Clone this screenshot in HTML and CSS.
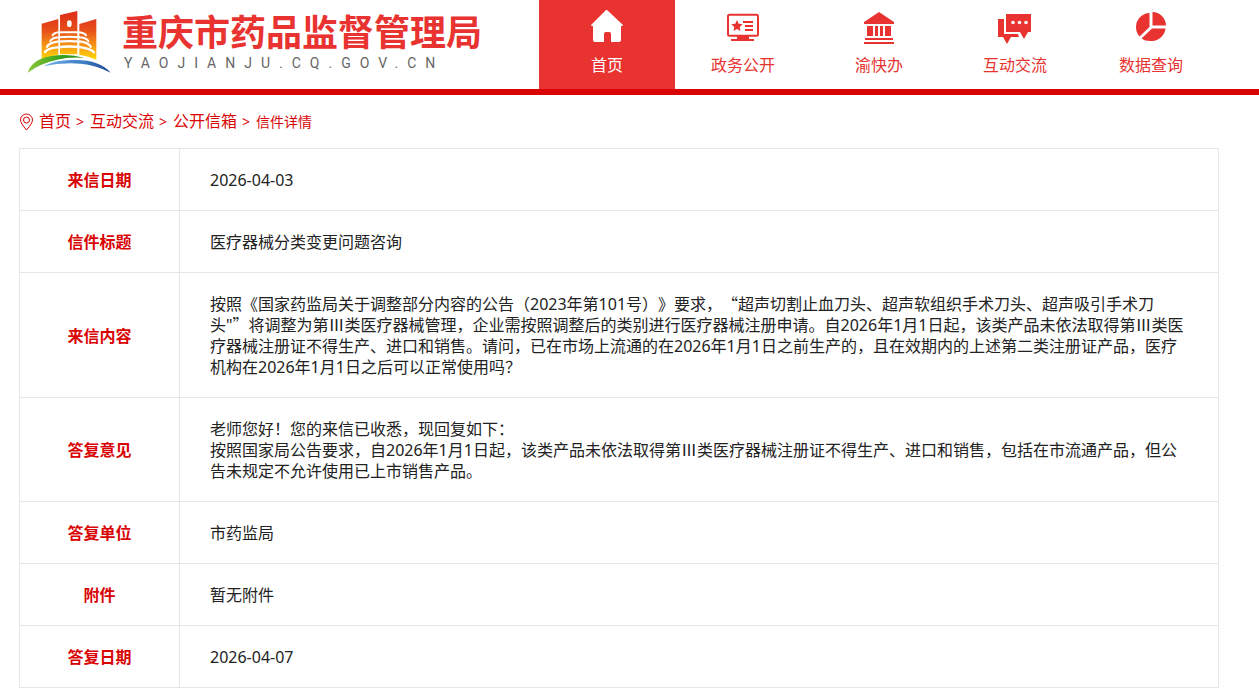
FILE: index.html
```html
<!DOCTYPE html>
<html lang="zh-CN">
<head>
  <meta charset="UTF-8">
  <meta name="viewport" content="width=device-width, initial-scale=1.0">
  <title>信件详情 - 重庆市药品监督管理局</title>
  <link rel="stylesheet" href="styles.css">
</head>
<body>
  <header class="header">
    <div class="wrap header-inner">
      <a class="logo" href="#">
        <svg class="logo-img" viewBox="0 0 300 225" aria-hidden="true">
          <defs>
            <linearGradient id="tower" x1="0" y1="18" x2="0" y2="165" gradientUnits="userSpaceOnUse">
              <stop offset="0" stop-color="#dc2a1a"/>
              <stop offset="0.4" stop-color="#e8501a"/>
              <stop offset="0.75" stop-color="#f7a014"/>
              <stop offset="1" stop-color="#ffdc00"/>
            </linearGradient>
            <linearGradient id="hill" x1="0" y1="0" x2="1" y2="0">
              <stop offset="0" stop-color="#8cc63a"/>
              <stop offset="0.6" stop-color="#35a01c"/>
              <stop offset="1" stop-color="#2c9420"/>
            </linearGradient>
            <linearGradient id="river" x1="0" y1="0" x2="1" y2="0">
              <stop offset="0" stop-color="#6fb4e6"/>
              <stop offset="0.6" stop-color="#3b7cc4"/>
              <stop offset="1" stop-color="#1d4793"/>
            </linearGradient>
          </defs>
          <g fill="url(#tower)">
            <path d="M65 56 115 42V149Q88 153 65 164Z"/>
            <path d="M120 30 172 18V148H120Z"/>
            <path d="M178 57 229 42V164Q205 153 178 149Z"/>
          </g>
          <ellipse cx="148" cy="56" rx="7" ry="10" fill="#fff"/>
          <g fill="none" stroke="#fff" stroke-width="6" stroke-linecap="round">
            <path d="M98 91Q101 84 117 82H177Q194 84 198 91"/>
            <path d="M91 109Q94 99 116 97Q148 93 180 97Q201 99 205 109"/>
            <path d="M81 125Q86 114 112 110Q148 107 184 110Q207 115 212 125" stroke-width="7"/>
            <path d="M75 141Q82 130 112 127Q148 122 184 127Q215 132 222 142" stroke-width="7"/>
          </g>
          <path d="M23 203Q39 156 112 151Q155 147 193 159Q150 155 112 164Q60 175 23 203Z" fill="url(#hill)"/>
          <path d="M70 184Q110 162 168 165Q239 165 272 203Q229 180 181 176Q122 172 70 184Z" fill="url(#river)"/>
        </svg>
        <span class="logo-text">
          <span class="logo-name">重庆市药品监督管理局</span>
          <span class="logo-domain">YAOJIANJU.CQ.GOV.CN</span>
        </span>
      </a>
      <nav class="nav">
        <a class="nav-item active" href="#">
          <svg class="nav-icon" viewBox="0 0 36 36" aria-hidden="true">
            <path d="M18 2 34 17Q34 18 33 18H32V32Q32 34 30 34H22V26Q22 24 20 24H17Q15 24 15 26V34H6Q4 34 4 32V18H3Q2 18 2 17L17 2Z"/>
          </svg>
          <span>首页</span>
        </a>
        <a class="nav-item" href="#">
          <svg class="nav-icon" viewBox="0 0 36 36" aria-hidden="true">
            <rect x="3" y="6.700" width="30" height="21" rx="1.500" fill="none" stroke="currentColor" stroke-width="2"/>
            <path d="m12 12 1.700 3.700 4 .5-3 2.800.8 4-3.500-2-3.500 2 .8-4-3-2.800 4-.5ZM18 13h10v2H18ZM20 17h8v2h-8ZM20 21h8v2h-8ZM12 28h12v3h5v2H6v-2h6Z"/>
          </svg>
          <span>政务公开</span>
        </a>
        <a class="nav-item" href="#">
          <svg class="nav-icon" viewBox="0 0 36 36" aria-hidden="true">
            <path d="M18 4 33 14V16H3V14ZM6 18h6v10H6ZM14 18h3v10h-3ZM19 18h3v10h-3ZM24 18h6v10h-6ZM4 30h28v2H4ZM3 34h30v2H3Z"/>
          </svg>
          <span>渝快办</span>
        </a>
        <a class="nav-item" href="#">
          <svg class="nav-icon" viewBox="0 0 36 36" aria-hidden="true">
            <path d="M1 11H7V26H21L22 29H14L10 36 6 29H1Z"/>
            <path d="M9 6H34V24H31L27 31 23 24H9Z"/>
            <g fill="#fff"><circle cx="16" cy="14.500" r="1.800"/><circle cx="22.500" cy="14.500" r="1.800"/><circle cx="29" cy="14.500" r="1.800"/></g>
          </svg>
          <span>互动交流</span>
        </a>
        <a class="nav-item" href="#">
          <svg class="nav-icon" viewBox="0 0 36 36" aria-hidden="true">
            <path d="M16.500 5V19L6.500 28.500Q3 24.500 3 19A14 14 0 0 1 16.500 5ZM19.500 4A14 14 0 0 1 33 17.500H19.500ZM19 20.500H32.500A14 14 0 0 1 19 33Q12.500 33.500 8.500 30.500Z"/>
          </svg>
          <span>数据查询</span>
        </a>
      </nav>
    </div>
  </header>

  <main class="wrap">
    <!-- 当前位置 -->
    <nav class="crumbs">
      <svg class="pin" viewBox="0 0 14 18" aria-hidden="true">
        <path d="M7 17Q1 10 1 7A6 6 0 0 1 13 7Q13 10 7 17Z"/>
        <circle cx="7" cy="7" r="3"/>
      </svg>
      <a href="#">首页</a>
      <span class="sep">&gt;</span>
      <a href="#">互动交流</a>
      <span class="sep">&gt;</span>
      <a href="#">公开信箱</a>
      <span class="sep">&gt;</span>
      <span class="current">信件详情</span>
    </nav>

    <!-- 信件内容 -->
    <table class="letter">
      <tr>
        <th scope="row">来信日期</th>
        <td>2026-04-03</td>
      </tr>
      <tr>
        <th scope="row">信件标题</th>
        <td>医疗器械分类变更问题咨询</td>
      </tr>
      <tr>
        <th scope="row">来信内容</th>
        <td>按照《国家药监局关于调整部分内容的公告（2023年第101号）》要求，<span class="cjk">“</span>超声切割止血刀头、超声软组织手术刀头、超声吸引手术刀头"<span class="cjk">”</span>将调整为第Ⅲ类医疗器械管理，企业需按照调整后的类别进行医疗器械注册申请。自2026年1月1日起，该类产品未依法取得第Ⅲ类医疗器械注册证不得生产、进口和销售。请问，已在市场上流通的在2026年1月1日之前生产的，且在效期内的上述第二类注册证产品，医疗机构在2026年1月1日之后可以正常使用吗？</td>
      </tr>
      <tr>
        <th scope="row">答复意见</th>
        <td>老师您好！您的来信已收悉，现回复如下：<br>按照国家局公告要求，自2026年1月1日起，该类产品未依法取得第Ⅲ类医疗器械注册证不得生产、进口和销售，包括在市流通产品，但公告未规定不允许使用已上市销售产品。</td>
      </tr>
      <tr>
        <th scope="row">答复单位</th>
        <td>市药监局</td>
      </tr>
      <tr>
        <th scope="row">附件</th>
        <td>暂无附件</td>
      </tr>
      <tr>
        <th scope="row">答复日期</th>
        <td>2026-04-07</td>
      </tr>
    </table>
  </main>
</body>
</html>
```
FILE: styles.css
```css
* {
  box-sizing: border-box;
}

body {
  margin: 0;
  font-family: "Noto Sans", "Noto Sans CJK SC", sans-serif;
  font-size: 16px;
  line-height: 21px;
  color: #222;
  background: #fff;
}

a {
  color: inherit;
  text-decoration: none;
}

.wrap {
  max-width: 1200px;
  margin: 0 40px 0 19px;
}

/* 头部 */
.header {
  border-bottom: 6px solid #d90404;
}

.header-inner {
  display: flex;
  justify-content: space-between;
}

.logo {
  display: flex;
  align-items: center;
  padding: 0 0 4px 1px;
}

.logo-img {
  width: 100px;
  height: 75px;
}

.logo-text {
  display: flex;
  flex-direction: column;
  margin-left: 2px;
}

.logo-name {
  font-size: 36px;
  font-weight: bold;
  line-height: 40px;
  color: #e83331;
}

.logo-domain {
  font-family: Roboto, "Liberation Sans", sans-serif;
  font-size: 14px;
  line-height: 20px;
  letter-spacing: 9px;
  padding-left: 2px;
  color: #666;
}

.nav {
  display: flex;
}

.nav-item {
  display: flex;
  flex-direction: column;
  align-items: center;
  gap: 11px;
  width: 136px;
  height: 89px;
  padding-top: 8px;
  color: #e83331;
}

.nav-item.active {
  background: #e83331;
  color: #fff;
}

.nav-icon {
  width: 36px;
  height: 36px;
  fill: currentColor;
}

/* 当前位置 */
.crumbs {
  display: flex;
  align-items: center;
  gap: 5px;
  height: 53px;
  color: #d90404;
}

.pin {
  width: 15px;
  height: 18px;
  fill: none;
  stroke: currentColor;
}

.sep,
.current {
  font-size: 14px;
}

.sep {
  width: 9px;
}

/* 信件表格 */
.letter {
  width: 100%;
  border-collapse: collapse;
}

.letter th,
.letter td {
  padding: 21px 30px 19px;
  border: 1px solid #e6e6e6;
}

.letter th {
  width: 160px;
  color: #d90404;
}

.letter td {
  text-align: left;
  text-spacing-trim: space-all;
}

/* 全角引号 */
.cjk {
  font-family: "Noto Sans CJK SC", sans-serif;
  font-feature-settings: "fwid";
  line-height: 1;
}
```
